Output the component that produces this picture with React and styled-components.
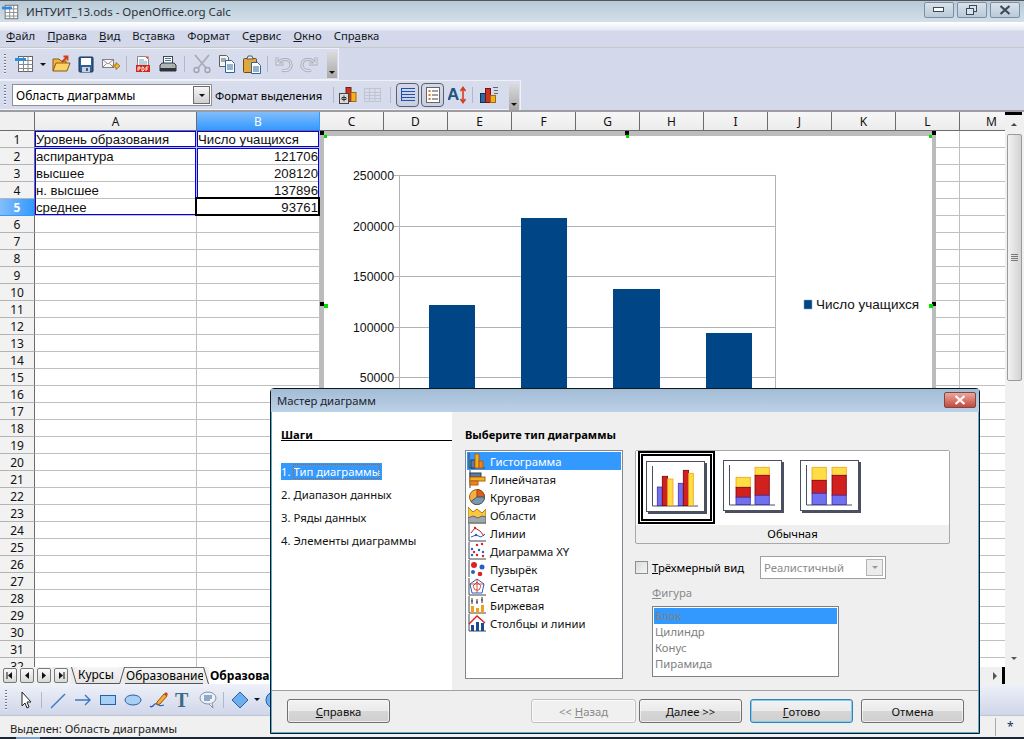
import React from 'react';
import styled, { createGlobalStyle } from 'styled-components';

const UI = '"Noto Sans", "DejaVu Sans", sans-serif';
const ARIAL = '"Liberation Sans", Arial, sans-serif';

const Global = createGlobalStyle`
  html, body { margin: 0; padding: 0; overflow: hidden; background: #d3d9eb; }
  * { box-sizing: border-box; }
`;

const Frame = styled.div`
  position: relative;
  width: 1024px;
  height: 739px;
  display: flex;
  flex-direction: column;
  overflow: hidden;
  font-family: ${UI};
  font-size: 11.3px;
  color: #000;
`;

const TitleBar = styled.div`
  height: 22px;
  border-top: 1px solid #565656;
  background: linear-gradient(#b7cad8, #d3dfe8);
  display: flex;
  align-items: center;
  padding-left: 2px;
`;
const TitleText = styled.span`
  margin-left: 6px;
  font-size: 11.5px;
  color: #2c3238;
`;
const WinButtons = styled.div`
  margin-left: auto;
  margin-right: 4px;
  display: flex;
  gap: 3px;
  align-self: flex-start;
  margin-top: 1px;
`;
const WinButton = styled.div`
  width: 30px;
  height: 16px;
  border: 1px solid #7d8ea6;
  border-radius: 2px;
  background: linear-gradient(#d8e2ea, #b9cad8);
  display: flex;
  align-items: center;
  justify-content: center;
`;

const MenuBar = styled.div`
  height: 26px;
  background: linear-gradient(#fff 0, #e6eaf3 8px, #d3d9eb 9px);
  display: flex;
  align-items: flex-end;
  padding: 0 0 3px 6px;
  gap: 12px;
  border-bottom: 1px solid #c8c8c4;
`;
const MenuItem = styled.span`
  line-height: 16px;
  color: #14181e;
`;
const Key = styled.span`
  text-decoration: underline;
`;

const ToolRow = styled.div`
  display: flex;
  height: ${p => p.$h}px;
  background: #d3d9eb;
`;
const Toolbar = styled.div`
  width: ${p => p.$w}px;
  display: flex;
  align-items: center;
  padding-left: 4px;
  background: linear-gradient(#d8ddee, #d5dbec);
  border-right: 1px solid #f0f2f8;
  border-bottom: 1px solid #f0f2f8;
  border-top: 1px solid #eef0f6;
  position: relative;
`;
const Grip = styled.div`
  width: 2px;
  height: 20px;
  margin-right: 6px;
  background: repeating-linear-gradient(#70767f 0 1px, #f4f5fa 1px 2px, transparent 2px 3px);
`;
const ToolBtn = styled.div`
  width: ${p => p.$w || 25}px;
  height: 24px;
  flex: none;
  display: flex;
  align-items: center;
  justify-content: center;
  margin-left: ${p => p.$ml || 0}px;
  ${p => p.$active && `
    border: 1px solid #5c6068;
    border-radius: 4px;
    background: linear-gradient(#d4d9ea, #c8cfe2);
    margin-right: 2px;
  `}
`;
const ToolSep = styled.div`
  width: 1px;
  height: 16px;
  flex: none;
  margin: 0 ${p => p.$m ?? 3}px;
  background: #b4b8c4;
`;
const Chevron = styled.div`
  position: absolute;
  right: 1px;
  top: 3px;
  width: 10px;
  height: 26px;
  background: linear-gradient(#dadada, #a9a9a9);
  display: flex;
  align-items: flex-end;
  justify-content: center;
  padding-bottom: 4px;
`;
const DownTri = styled.div`
  width: 0;
  height: 0;
  border-left: 3px solid transparent;
  border-right: 3px solid transparent;
  border-top: 3px solid ${p => p.$c || '#111'};
`;
const Combo = styled.div`
  width: 200px;
  height: 22px;
  flex: none;
  background: #fff;
  border: 1px solid #8e8f8f;
  font-size: 12px;
  display: flex;
  align-items: center;
  padding-left: 3px;
  justify-content: space-between;
`;
const ComboBtn = styled.div`
  width: 17px;
  height: 18px;
  margin-right: 1px;
  border: 1px solid #6c6c6c;
  background: linear-gradient(#f6f6f6, #cfcfcf);
  display: flex;
  align-items: center;
  justify-content: center;
`;
const ToolLabel = styled.span`
  margin-left: 3px;
  flex: none;
  width: 116px;
  white-space: nowrap;
`;

const SheetArea = styled.div`
  height: 557px;
  display: flex;
  border-top: 2px solid #9d9da1;
  background: #f0f0f0;
`;
const GridWrap = styled.div`
  position: relative;
  width: 1005px;
  overflow: hidden;
  background: #fff;
`;
const SheetGrid = styled.div`
  display: grid;
  grid-template-columns: 35px 162px 123px repeat(11, 64px);
  grid-auto-rows: 17px;
  grid-template-rows: 19px;
`;
const Corner = styled.div`
  background: #f0f0f0;
  border-right: 1px solid #6c6c6c;
  border-bottom: 1px solid #6c6c6c;
`;
const ColHead = styled.div`
  background: ${p => (p.$on ? 'linear-gradient(#82bdfb, #3399ff)' : 'linear-gradient(#f6f6f6, #ececec)')};
  color: ${p => (p.$on ? '#fff' : '#111')};
  border-right: 1px solid ${p => (p.$on ? '#3399ff' : '#6c6c6c')};
  border-bottom: 1px solid #6c6c6c;
  display: flex;
  align-items: center;
  justify-content: center;
  font-size: 12px;
`;
const RowHead = styled(ColHead)`
  background: ${p => (p.$on ? 'linear-gradient(90deg, #82bdfb, #3399ff)' : '#f2f2f2')};
  border-right: 1px solid #6c6c6c;
  border-bottom: 1px solid ${p => (p.$on ? '#3399ff' : '#b4b4b4')};
  font-weight: ${p => (p.$on ? 700 : 400)};
`;
const Cell = styled.div`
  border-right: 1px solid #c0c0c0;
  border-bottom: 1px solid #c0c0c0;
  font-family: ${ARIAL};
  font-size: 13.2px;
  line-height: 17px;
  padding: 0 1px;
  white-space: nowrap;
  overflow: hidden;
  color: #111;
  text-align: ${p => (p.$num ? 'right' : 'left')};
`;
const RangeBox = styled.div`
  position: absolute;
  left: ${p => p.$x}px;
  top: ${p => p.$y}px;
  width: ${p => p.$w}px;
  height: ${p => p.$h}px;
  border: ${p => p.$b || '1px solid #0000f0'};
  pointer-events: none;
`;

const ChartFrame = styled.div`
  position: absolute;
  left: 320px;
  top: 19px;
  width: 616px;
  height: 360px;
  background: #fff;
  border: 4px solid #bcbcbc;
  border-top-width: 5px;
`;
const Handle = styled.div`
  position: absolute;
  left: ${p => p.$x}px;
  top: ${p => p.$y}px;
  width: ${p => p.$s || 4}px;
  height: ${p => p.$s || 4}px;
  background: ${p => p.$c || '#000'};
`;

const VScroll = styled.div`
  width: 19px;
  padding-bottom: 2px;
  display: flex;
  flex-direction: column;
  align-items: flex-start;
`;
const ScrollCap = styled.div`
  width: 17px;
  height: 3px;
  background: #000;
`;
const ScrollArrow = styled.div`
  width: 17px;
  height: ${p => p.$h || 19}px;
  margin-top: ${p => p.$mt || 0};
  display: flex;
  align-items: center;
  justify-content: center;
`;
const UpTri = styled.div`
  width: 0;
  height: 0;
  border-left: 3px solid transparent;
  border-right: 3px solid transparent;
  border-bottom: 3px solid #444;
`;
const Thumb = styled.div`
  width: 15px;
  height: 247px;
  margin-left: 2px;
  border: 1px solid #9a9a9a;
  border-radius: 2px;
  background: linear-gradient(90deg, #f2f2f2, #d2d2d2);
  display: flex;
  flex-direction: column;
  align-items: center;
  justify-content: center;
  gap: 1px;
`;
const ThumbLine = styled.div`
  width: 7px;
  height: 1px;
  background: #777;
`;

const TabBar = styled.div`
  height: 17px;
  display: flex;
  align-items: center;
  padding-left: 3px;
  background: #f0f0f0;
`;
const NavBtn = styled.div`
  width: 14px;
  height: 15px;
  margin-right: 3px;
  border: 1px solid #777;
  border-radius: 2px;
  background: linear-gradient(#fafafa, #d8d8d8);
  display: flex;
  align-items: center;
  justify-content: center;
`;
const SheetTab = styled.div`
  height: 17px;
  display: flex;
  align-items: center;
  padding: 0 1px 1px;
  font-size: 12px;
  font-weight: ${p => (p.$on ? 700 : 400)};
  white-space: nowrap;
  flex: none;
  width: ${p => p.$w}px;
  overflow: hidden;
  border-top: ${p => (p.$top ? '1px solid #777' : 'none')};
  border-bottom: ${p => (p.$on ? 'none' : '1px solid #555')};
  background: ${p => (p.$on ? '#fff' : 'linear-gradient(#f6f6f6, #e4e4e4)')};
`;
const TabEdge = styled.svg`
  flex: none;
  display: block;
`;
const TabScrollEnd = styled.div`
  margin-left: auto;
  width: 37px;
  height: 17px;
  margin-right: 19px;
  display: flex;
  align-items: center;
  justify-content: space-between;
  padding-left: 25px;
`;
const RightTri = styled.div`
  width: 0;
  height: 0;
  border-top: 4px solid transparent;
  border-bottom: 4px solid transparent;
  border-left: 4px solid #555;
`;
const TabBlackBar = styled.div`
  width: 3px;
  height: 17px;
  background: #000;
`;

const DrawBar = styled.div`
  height: 32px;
  padding-left: 5px;
  display: flex;
  align-items: center;
  background: linear-gradient(#eef1f8, #d0d6ea);
  border-bottom: 1px solid #c0c4cc;
`;
const StatusBar = styled.div`
  height: 21px;
  display: flex;
  align-items: center;
  padding: 3px 0 0 10px;
  background: #f0f0f0;
  color: #222;
  position: relative;
`;
const StatusStar = styled.div`
  position: absolute;
  left: 995px;
  top: 2px;
  height: 18px;
  padding-left: 11px;
  border-left: 1px solid #aaa;
  font-size: 12px;
  color: #203060;
`;
const Taskbar = styled.div`
  height: 2px;
  background: #1c2530;
  padding-left: 16px;
`;
const StartOrb = styled.div`
  width: 24px;
  height: 2px;
  background: #7fa0c0;
`;

const Dialog = styled.div`
  position: absolute;
  left: 270px;
  top: 388px;
  width: 710px;
  height: 346px;
  display: flex;
  flex-direction: column;
  border: 1px solid #101820;
  border-radius: 4px 4px 0 0;
  background: #55b0d8;
  padding: 0 1px 1px;
`;
const DialogTitle = styled.div`
  height: 23px;
  margin: 0 -1px;
  display: flex;
  align-items: center;
  padding-left: 6px;
  color: #1c2430;
  background: linear-gradient(#a3bcd6, #bbd1e6);
  position: relative;
`;
const CloseBtn = styled.div`
  position: absolute;
  right: 3px;
  top: 3px;
  width: 32px;
  height: 16px;
  border: 1px solid #7a4a48;
  border-radius: 2px;
  background: linear-gradient(#e9a99c, #c8493c);
  display: flex;
  align-items: center;
  justify-content: center;
`;
const DialogBody = styled.div`
  flex: 1;
  display: flex;
  min-height: 0;
`;
const StepsPane = styled.div`
  width: 180px;
  background: #fff;
  padding: 16px 0 0 9px;
`;
const StepsHead = styled.div`
  font-weight: 700;
  line-height: 14px;
  border-bottom: 1px solid #000;
  height: 13px;
  margin-bottom: 22px;
`;
const Step = styled.div`
  height: 17px;
  line-height: 17px;
  margin-bottom: 6px;
  width: ${p => (p.$on ? '101px' : 'auto')};
  background: ${p => (p.$on ? '#3399ff' : 'transparent')};
  color: ${p => (p.$on ? '#fff' : '#111')};
  white-space: nowrap;
`;
const StepFocus = styled.span`
  outline: 1px dotted #c06000;
  outline-offset: -1px;
`;
const MainPane = styled.div`
  flex: 1;
  background: #efefef;
  padding: 15px 0 0 13px;
`;
const PaneHead = styled.div`
  font-weight: 700;
  font-size: 11.1px;
  line-height: 16px;
  margin-bottom: 7px;
`;
const PaneGrid = styled.div`
  display: flex;
  gap: 12px;
`;
const TypeList = styled.div`
  width: 158px;
  height: 229px;
  background: #fff;
  border: 1px solid #82868e;
  padding: 1px;
`;
const TypeItem = styled.div`
  height: 18px;
  display: flex;
  align-items: center;
  gap: 4px;
  padding-left: 1px;
  white-space: nowrap;
  background: ${p => (p.$on ? '#3399ff' : 'transparent')};
  color: ${p => (p.$on ? '#fff' : '#111')};
`;
const OptionsCol = styled.div`
  width: 315px;
  display: flex;
  flex-direction: column;
`;
const VariantPanel = styled.div`
  height: 94px;
  border: 1px solid #a8a8a8;
  border-radius: 2px;
  display: flex;
  flex-direction: column;
`;
const VariantRow = styled.div`
  height: 74px;
  background: #fff;
  display: flex;
  padding-left: 2px;
  align-items: flex-start;
`;
const VariantCell = styled.div`
  width: 77px;
  height: 73px;
  flex: none;
  display: flex;
  padding: 9px 0 0 8px;
  ${p => p.$on && 'border: 5px double #000; padding: 5px 0 0 3px;'}
`;
const VariantLabel = styled.div`
  flex: 1;
  text-align: center;
  line-height: 18px;
`;
const CheckRow = styled.div`
  display: flex;
  align-items: center;
  height: 23px;
  margin-top: 12px;
`;
const CheckBox = styled.div`
  width: 13px;
  height: 13px;
  border: 1px solid #8e8f8f;
  background: linear-gradient(135deg, #dcdcdc, #f4f4f4);
  margin-right: 4px;
`;
const CheckLabel = styled.span`
  width: 108px;
  white-space: nowrap;
`;
const DisabledSelect = styled.div`
  width: 126px;
  height: 23px;
  background: #fff;
  border: 1px solid #a0a0a0;
  color: #8a8a8a;
  display: flex;
  align-items: center;
  justify-content: space-between;
  padding-left: 3px;
`;
const DisabledBtn = styled.div`
  width: 17px;
  height: 17px;
  margin-right: 2px;
  border: 1px solid #b4b4b4;
  background: #ececec;
  display: flex;
  align-items: center;
  justify-content: center;
`;
const ShapeBlock = styled.div`
  margin: 6px 0 0 17px;
`;
const ShapeLabel = styled.div`
  color: #8a8a8a;
  line-height: 16px;
  margin-bottom: 5px;
`;
const ShapeList = styled.div`
  width: 187px;
  height: 71px;
  background: #fff;
  border: 1px solid #7c8088;
  padding: 1px;
`;
const ShapeItem = styled.div`
  height: 16px;
  line-height: 16px;
  padding-left: 1px;
  color: #808080;
  background: ${p => (p.$on ? '#3399ff' : 'transparent')};
`;
const DialogFooter = styled.div`
  height: 42px;
  flex: none;
  background: #efefef;
  border-top: 1px solid #a0a0a0;
  display: flex;
  align-items: flex-start;
  padding: 8px 13px 0 15px;
  gap: 3px;
`;
const WizButton = styled.div`
  width: ${p => p.$w || 103}px;
  height: 24px;
  flex: none;
  border: 1px solid ${p => (p.$focus ? '#3c7fb1' : p.$off ? '#c0c0c0' : '#707070')};
  border-radius: 3px;
  background: ${p => (p.$off ? '#f0f0f0' : 'linear-gradient(#f2f2f2 0, #ebebeb 48%, #d6d6d6 52%, #cfcfcf 100%)')};
  color: ${p => (p.$off ? '#888' : '#111')};
  box-shadow: ${p => (p.$focus ? 'inset 0 0 0 1px #7fd0f0' : 'inset 0 0 0 1px rgba(255,255,255,0.6)')};
  display: flex;
  align-items: center;
  justify-content: center;
  white-space: pre;
  margin-left: ${p => p.$ml || 0}px;
`;

const Ic = ({ w = 20, h = 20, children }) => (
  <svg width={w} height={h} viewBox={`0 0 ${w} ${h}`}>{children}</svg>
);

const TableIcon = ({ size = 20 }) => (
  <svg width={size} height={size} viewBox="0 0 20 20">
    <rect x="3.5" y="2.5" width="14" height="15" fill="#fff" stroke="#666" />
    <path d="M3.5 6.5h14M3.5 10.5h14M3.5 14.5h14M8.5 2.5v15M13 2.5v15" stroke="#888" />
    <rect x="0" y="4" width="11" height="3" fill="#2b8be0" />
  </svg>
);
const ToolIcons = {
  open: (
    <Ic>
      <path d="M2 5h6l2 2h5v3H5L2 17z" fill="#f4b63a" stroke="#8a5a10" />
      <path d="M2 17l3-8h14l-3 8z" fill="#fbd26a" stroke="#8a5a10" />
      <path d="M11 8l5-5M12.5 2.5h4v4" stroke="#d04010" strokeWidth="1.8" fill="none" />
    </Ic>
  ),
  save: (
    <Ic>
      <rect x="3" y="3" width="14" height="15" rx="1" fill="#2f5f96" stroke="#16304f" />
      <rect x="5" y="4" width="10" height="7" fill="#fff" />
      <rect x="6" y="13" width="8" height="5" fill="#c8d0da" />
      <rect x="10" y="14" width="2" height="3" fill="#2f5f96" />
    </Ic>
  ),
  mail: (
    <Ic>
      <rect x="1.5" y="5.5" width="11" height="8" fill="#f8f8f8" stroke="#808080" />
      <path d="M1.5 5.5l5.500 4.500 5.500-4.500M1.500 13.500l4-4M12.500 13.500l-4-4" fill="none" stroke="#909090" />
      <path d="M12 11h3V8.500l4 3.500-4 3.500V13h-3z" fill="#f4b830" stroke="#8a5a10" strokeWidth=".7" />
    </Ic>
  ),
  pdf: (
    <Ic>
      <path d="M4.500 2.500h8l3 3v8h-11z" fill="#fff" stroke="#8a8a8a" />
      <path d="M12 2.500h3.500v3z" fill="#e04030" />
      <path d="M6 6h5M6 8h8M6 10h8" stroke="#70a0c8" />
      <rect x="3" y="11" width="14" height="7" fill="#d02818" />
      <path d="M5 17v-4h2v2H5M9 13v4h1l1-1v-2l-1-1zM13 17v-4h2.500M13 15h2" stroke="#fff" fill="none" strokeWidth=".9" />
    </Ic>
  ),
  print: (
    <Ic>
      <rect x="5.500" y="2.500" width="9" height="7" fill="#fff" stroke="#444" />
      <path d="M7 4.500h6M7 6.500h6" stroke="#3a70a8" />
      <path d="M2 11l2-2h12l2 2v6H2z" fill="#b0b4ba" stroke="#30343a" />
      <rect x="2" y="14" width="16" height="3" fill="#30343a" />
      <rect x="14" y="11.500" width="2" height="1" fill="#60c040" />
    </Ic>
  ),
  cut: (
    <Ic>
      <path d="M3 1l11 13M17 1L6 14" stroke="#a8acb4" strokeWidth="1.8" />
      <circle cx="4.500" cy="16" r="2.500" fill="none" stroke="#a0a4ac" strokeWidth="1.4" />
      <circle cx="15.500" cy="16" r="2.500" fill="none" stroke="#a0a4ac" strokeWidth="1.4" />
    </Ic>
  ),
  copy: (
    <Ic>
      <path d="M2.500 1.500h7l2 2v9h-9z" fill="#f4f4f4" stroke="#5a5f66" />
      <path d="M4 5h5M4 7h5" stroke="#5a5f66" />
      <path d="M8.500 6.500h6l3 3v9h-9z" fill="#fff" stroke="#2e6498" />
      <path d="M10 11h6M10 13h6M10 15h6" stroke="#2e6498" />
    </Ic>
  ),
  paste: (
    <Ic>
      <rect x="1.500" y="4.500" width="13" height="14" rx="1" fill="#e0a83c" stroke="#6a4a14" />
      <path d="M5 5l1-3h4l1 3z" fill="#e8e8e8" stroke="#5a5f66" />
      <path d="M9.500 8.500h6l3 3v8h-9z" fill="#fff" stroke="#2e6498" />
      <path d="M11 13h6M11 15h6M11 17h6" stroke="#2e6498" />
    </Ic>
  ),
  undo: (
    <Ic>
      <path d="M3 3v7h7M4 10c2-6 12-6 13 0 1 5-5 8-9 6" fill="none" stroke="#a8acb6" strokeWidth="3" />
      <path d="M3 3v7h7M4 10c2-6 12-6 13 0 1 5-5 8-9 6" fill="none" stroke="#dfe3ee" strokeWidth="1.200" />
    </Ic>
  ),
  redo: (
    <Ic>
      <path d="M17 3v7h-7M16 10c-2-6-12-6-13 0-1 5 5 8 9 6" fill="none" stroke="#a8acb6" strokeWidth="3" />
      <path d="M17 3v7h-7M16 10c-2-6-12-6-13 0-1 5 5 8 9 6" fill="none" stroke="#dfe3ee" strokeWidth="1.200" />
    </Ic>
  ),
  chartEdit: (
    <Ic>
      <rect x="8" y="2.500" width="5" height="14" fill="#d03020" stroke="#702018" />
      <rect x="13" y="7.500" width="5" height="9" fill="#f4b020" stroke="#a06a10" />
      <rect x="1.500" y="8.500" width="9" height="10" fill="#d8dade" stroke="#444" />
      <path d="M6 10.500v6M4 12.500h4v2H4z" stroke="#333" fill="#f4f4f4" />
    </Ic>
  ),
  gridOff: (
    <Ic>
      <rect x="1.500" y="3.500" width="16" height="13" fill="none" stroke="#c0c4cc" />
      <path d="M1.500 7.500h16M1.500 10.500h16M1.500 13.500h16M6.500 3.500v13M12 3.500v13" stroke="#c0c4cc" />
    </Ic>
  ),
  titleOn: (
    <Ic>
      <path d="M3 3.500h14M3 6.500h14M3 9.500h14M3 12.500h14M3 15.500h14M3.500 3v13" stroke="#2050b0" fill="none" />
    </Ic>
  ),
  legendOn: (
    <Ic>
      <rect x="3.500" y="2.500" width="13" height="15" fill="#fff" stroke="#666" />
      <path d="M5.500 6h2M5.500 10h2M5.500 14h2" stroke="#e07020" strokeWidth="2" />
      <path d="M9 6h6M9 10h6M9 14h6" stroke="#444" />
    </Ic>
  ),
  scaleText: (
    <Ic>
      <text x="-1" y="15" fontFamily={ARIAL} fontWeight="700" fontSize="17" fill="#24527e">A</text>
      <path d="M15 4v12M12.500 6L15 2.500 17.500 6M12.500 14L15 17.500 17.500 14" stroke="#d04020" strokeWidth="1.600" fill="none" />
    </Ic>
  ),
  chartType: (
    <Ic>
      <rect x="1.500" y="8.500" width="5" height="9" fill="#2c68a8" stroke="#16304f" />
      <rect x="6.500" y="3.500" width="5" height="14" fill="#d03020" stroke="#701810" />
      <rect x="11.500" y="10.500" width="5" height="7" fill="#f4b020" stroke="#a06a10" />
      <path d="M14 2.500h5M15 5.500h4M15 8.500h4" stroke="#666" />
    </Ic>
  ),
};

const DrawIcons = {
  cursor: <Ic><path d="M6 2v14l3-3 2 5 2-1-2-5h4z" fill="#fff" stroke="#222" /></Ic>,
  line: <Ic><path d="M3 18L17 4" stroke="#3a78c8" strokeWidth="1.400" /></Ic>,
  arrow: <Ic><path d="M2 10h15M12 5l5 5-5 5" stroke="#3a78c8" strokeWidth="1.400" fill="none" /></Ic>,
  rect: <Ic><rect x="2.500" y="5.500" width="15" height="9" fill="#a8d0f4" stroke="#2860a8" /></Ic>,
  ellipse: <Ic><ellipse cx="10" cy="10" rx="8" ry="5" fill="#a8d0f4" stroke="#2860a8" /></Ic>,
  free: (
    <Ic>
      <path d="M2 16c3 3 4-4 7-2s4 2 7 1" stroke="#2860c0" strokeWidth="1.300" fill="none" />
      <path d="M9 12l7-8 3 2-7 8-3 1z" fill="#f4b030" stroke="#a05010" />
      <path d="M16 4l3 2 1-2-2-2z" fill="#d04030" />
    </Ic>
  ),
  text: <Ic><text x="2" y="17" fontFamily='"Liberation Serif", serif' fontWeight="700" fontSize="20" fill="#3c6a88">T</text></Ic>,
  callout: (
    <Ic>
      <ellipse cx="10" cy="8" rx="8" ry="6" fill="#eef2f8" stroke="#8a9098" />
      <path d="M11 14l4 4-1-5" fill="#eef2f8" stroke="#8a9098" />
      <path d="M6 6h8M6 8h8M6 10h6" stroke="#2860a8" />
    </Ic>
  ),
  diamond: <Ic><path d="M10 2l8 8-8 8-8-8z" fill="#6ab0ee" stroke="#2860a8" /></Ic>,
  flow: <Ic><circle cx="10" cy="10" r="8" fill="#6ab0ee" stroke="#2860a8" /></Ic>,
};

const S = 18;
const TypeIcons = [
  <Ic w={S} h={S}>
    <path d="M1 1v15h16" stroke="#445" fill="none" />
    <rect x="3" y="8" width="4" height="8" fill="#5a7ea0" stroke="#2a3e50" />
    <rect x="7" y="2" width="4" height="14" fill="#f4b020" stroke="#b06010" />
    <rect x="11" y="9" width="4" height="7" fill="#f08020" stroke="#b06010" />
  </Ic>,
  <Ic w={S} h={S}>
    <path d="M2 0v18" stroke="#445" />
    <rect x="2" y="3" width="11" height="4" fill="#5a7ea0" stroke="#2a3e50" />
    <rect x="2" y="7" width="15" height="4" fill="#f4b020" stroke="#b06010" />
    <rect x="2" y="11" width="8" height="4" fill="#f08020" stroke="#b06010" />
  </Ic>,
  <Ic w={S} h={S}>
    <circle cx="9" cy="9" r="7.500" fill="#f4b040" stroke="#a06010" />
    <path d="M9 9V1.500a7.500 7.500 0 0 1 7.500 7.500z" fill="#d86020" stroke="#a04010" />
    <path d="M9 9h7.500A7.500 7.500 0 0 1 3 13.500z" fill="#7a98b0" stroke="#44586a" />
  </Ic>,
  <Ic w={S} h={S}>
    <path d="M0 1l5 5 4-3 5 4 4-4v14H0z" fill="#f8c840" stroke="#b07810" />
    <path d="M0 12l5-2 5 2 4-2 4 1v6H0z" fill="#a0a8b0" stroke="#5a6470" />
  </Ic>,
  <Ic w={S} h={S}>
    <path d="M1 0v17h17" stroke="#445" fill="none" />
    <path d="M3 13l5-2 5 2 4-3" stroke="#2860c0" fill="none" />
    <path d="M3 9l4-5 5 3 4 5" stroke="#d02020" fill="none" />
    <circle cx="7" cy="4" r="1.200" fill="#d02020" />
    <circle cx="8" cy="11" r="1.200" fill="#2860c0" />
  </Ic>,
  <Ic w={S} h={S}>
    <path d="M1 0v17h17" stroke="#445" fill="none" />
    {[[4, 7, 0], [9, 3, 1], [14, 2, 1], [6, 10, 1], [11, 8, 0], [4, 13, 0], [9, 13, 1], [15, 10, 0], [15, 14, 1]].map(([x, y, r], i) => (
      <circle key={i} cx={x} cy={y} r="1.200" fill={r ? '#d82020' : '#2860c0'} />
    ))}
  </Ic>,
  <Ic w={S} h={S}>
    <path d="M1 0v17" stroke="#445" fill="none" />
    <circle cx="6" cy="5" r="3" fill="#e02020" />
    <circle cx="14" cy="7" r="2.500" fill="#2860c0" />
    <circle cx="5" cy="12" r="2" fill="#2860c0" />
    <circle cx="12" cy="14" r="2.300" fill="#e02020" />
  </Ic>,
  <Ic w={S} h={S}>
    <path d="M1 0v17h17" stroke="#445" fill="none" />
    <path d="M9 1l7 5-2 9H4L2 6z" fill="none" stroke="#2860c0" />
    <path d="M9 4l4 4-2 4H7L5 8zM9 1v14M2 6l14 0" fill="none" stroke="#c83020" strokeWidth=".8" />
  </Ic>,
  <Ic w={S} h={S}>
    <path d="M1 0v17h17" stroke="#445" fill="none" />
    <path d="M4 2v6M3 5h2M9 3v5M8 6h2M14 1v6M13 4h2" stroke="#333" />
    <rect x="3" y="10" width="3" height="7" fill="#f0a020" />
    <rect x="8" y="12" width="3" height="5" fill="#f0a020" />
    <rect x="13" y="9" width="3" height="8" fill="#f0a020" />
  </Ic>,
  <Ic w={S} h={S}>
    <path d="M1 0v17h17" stroke="#445" fill="none" />
    <rect x="3" y="11" width="3" height="6" fill="#1c4a90" />
    <rect x="8" y="8" width="3" height="9" fill="#1c4a90" />
    <rect x="13" y="9" width="3" height="8" fill="#1c4a90" />
    <path d="M1 10l8-8 8 7" stroke="#d82020" strokeWidth="1.400" fill="none" />
  </Ic>,
];

const columns = ['A', 'B', 'C', 'D', 'E', 'F', 'G', 'H', 'I', 'J', 'K', 'L', 'M'];
const rowsData = {
  1: ['Уровень образования', 'Число учащихся'],
  2: ['аспирантура', '121706'],
  3: ['высшее', '208120'],
  4: ['н. высшее', '137896'],
  5: ['среднее', '93761'],
};
const rowNumbers = Array.from({ length: 32 }, (_, i) => i + 1);

const bars = [
  { x: 429, w: 46, top: 305 },
  { x: 521, w: 46, top: 218 },
  { x: 613, w: 47, top: 289 },
  { x: 706, w: 46, top: 333 },
];
const axisTicks = [
  { y: 175, label: '250000' },
  { y: 226, label: '200000' },
  { y: 276, label: '150000' },
  { y: 327, label: '100000' },
  { y: 377, label: '50000' },
];

const chartTypes = ['Гистограмма', 'Линейчатая', 'Круговая', 'Области', 'Линии', 'Диаграмма XY', 'Пузырёк', 'Сетчатая', 'Биржевая', 'Столбцы и линии'];

const BLUE = ['#7070f0', '#4030b0'];
const RED = ['#d02020', '#800000'];
const YEL = ['#ffdd44', '#f0a020'];

const thumbs = [
  [
    [11.3, 26, 5, 18.6, BLUE], [16.3, 15.3, 5.3, 29.3, RED], [21.6, 18, 5.4, 26.6, YEL],
    [32.3, 22.3, 5, 22.3, BLUE], [37.3, 9.3, 5.3, 35.3, RED], [42.6, 12.3, 4.7, 32.3, YEL],
  ],
  [
    [13, 17.3, 14.3, 10, YEL], [13, 27.3, 14.3, 10, RED], [13, 37.3, 14.3, 7.3, BLUE],
    [32, 7.3, 14.3, 8, YEL], [32, 15.3, 14.3, 20, RED], [32, 35.3, 14.3, 9.3, BLUE],
  ],
  [
    [12, 7.3, 14.3, 13, YEL], [12, 20.3, 14.3, 13, RED], [12, 33.3, 14.3, 11.3, BLUE],
    [32, 7.3, 14.3, 8, YEL], [32, 15.3, 14.3, 20, RED], [32, 35.3, 14.3, 9.3, BLUE],
  ],
];

const ChartThumb = ({ rects }) => (
  <svg width="61" height="53" viewBox="0 0 61 53">
    <rect x="2" y="2" width="59" height="51" fill="#4a5060" />
    <rect x="0.5" y="0.5" width="58" height="50" fill="#fff" stroke="#4a5060" />
    <path d="M6.5 5v40H52" fill="none" stroke="#4a5060" />
    {rects.map(([x, y, w, h, c], i) => (
      <rect key={i} x={x} y={y} width={w} height={h} fill={c[0]} stroke={c[1]} strokeWidth=".8" />
    ))}
  </svg>
);

const NavArrow = ({ dir, stop }) => (
  <svg width="8" height="9" viewBox="0 0 8 9">
    {dir === 'l' ? <path d="M6 1v7L2 4.5z" fill="#111" /> : <path d="M2 1v7l4-3.5z" fill="#111" />}
    {stop && <path d={dir === 'l' ? 'M1 1v7' : 'M7 1v7'} stroke="#111" />}
  </svg>
);

// slanted edge between two sheet tabs; fall = top-left to bottom-right
const Edge = ({ fall }) => (
  <TabEdge width="6" height="17" viewBox="0 0 6 17">
    <path d={fall ? 'M0 0L6 17H0z' : 'M6 0L0 17H6z'} fill="#ececec" />
    <path d={fall ? 'M0.500 0L5.500 17' : 'M5.500 0L0.500 17'} stroke="#555" fill="none" />
  </TabEdge>
);

function App() {
  return (
    <Frame>
      <Global />
      <TitleBar>
        <TableIcon size={18} />
        <TitleText>ИНТУИТ_13.ods - OpenOffice.org Calc</TitleText>
        <WinButtons>
          <WinButton>
            <svg width="12" height="6" viewBox="0 0 12 6"><rect x=".5" y=".5" width="10" height="4" fill="#fff" stroke="#3c4a5a" /></svg>
          </WinButton>
          <WinButton>
            <svg width="12" height="11" viewBox="0 0 12 11"><rect x="3.5" y=".5" width="7" height="6" fill="#d8e2ea" stroke="#3c4a5a" /><rect x=".5" y="3.5" width="7" height="6" fill="#d8e2ea" stroke="#3c4a5a" /></svg>
          </WinButton>
          <WinButton>
            <svg width="12" height="10" viewBox="0 0 12 10"><path d="M1.5 1l9 8M10.5 1l-9 8" stroke="#3c4a5a" strokeWidth="2.2" /></svg>
          </WinButton>
        </WinButtons>
      </TitleBar>

      <MenuBar>
        <MenuItem><Key>Ф</Key>айл</MenuItem>
        <MenuItem><Key>П</Key>равка</MenuItem>
        <MenuItem><Key>В</Key>ид</MenuItem>
        <MenuItem>Вс<Key>т</Key>авка</MenuItem>
        <MenuItem>Фо<Key>р</Key>мат</MenuItem>
        <MenuItem>С<Key>е</Key>рвис</MenuItem>
        <MenuItem><Key>О</Key>кно</MenuItem>
        <MenuItem>Спр<Key>а</Key>вка</MenuItem>
      </MenuBar>

      <ToolRow $h={32}>
        <Toolbar $w={339}>
          <Grip />
          <ToolBtn><TableIcon /></ToolBtn>
          <ToolBtn $w={11}><DownTri /></ToolBtn>
          <ToolBtn>{ToolIcons.open}</ToolBtn>
          <ToolBtn>{ToolIcons.save}</ToolBtn>
          <ToolBtn>{ToolIcons.mail}</ToolBtn>
          <ToolSep />
          <ToolBtn>{ToolIcons.pdf}</ToolBtn>
          <ToolBtn>{ToolIcons.print}</ToolBtn>
          <ToolSep $m={4} />
          <ToolBtn>{ToolIcons.cut}</ToolBtn>
          <ToolBtn>{ToolIcons.copy}</ToolBtn>
          <ToolBtn>{ToolIcons.paste}</ToolBtn>
          <ToolSep />
          <ToolBtn>{ToolIcons.undo}</ToolBtn>
          <ToolBtn>{ToolIcons.redo}</ToolBtn>
          <Chevron><DownTri /></Chevron>
        </Toolbar>
      </ToolRow>

      <ToolRow $h={30}>
        <Toolbar $w={521}>
          <Grip />
          <Combo>
            Область диаграммы
            <ComboBtn><DownTri /></ComboBtn>
          </Combo>
          <ToolLabel>Формат выделения</ToolLabel>
          <ToolSep $m={2} />
          <ToolBtn $w={23}>{ToolIcons.chartEdit}</ToolBtn>
          <ToolBtn $w={28}>{ToolIcons.gridOff}</ToolBtn>
          <ToolSep />
          <ToolBtn $active $w={23} $ml={2}>{ToolIcons.titleOn}</ToolBtn>
          <ToolBtn $active $w={23}>{ToolIcons.legendOn}</ToolBtn>
          <ToolBtn $w={23}>{ToolIcons.scaleText}</ToolBtn>
          <ToolSep />
          <ToolBtn>{ToolIcons.chartType}</ToolBtn>
          <Chevron><DownTri /></Chevron>
        </Toolbar>
      </ToolRow>

      <SheetArea>
        <GridWrap>
          <SheetGrid>
            <Corner />
            {columns.map(c => <ColHead key={c} $on={c === 'B'}>{c}</ColHead>)}
            {rowNumbers.map(n => (
              <React.Fragment key={n}>
                <RowHead $on={n === 5}>{n}</RowHead>
                {columns.map((c, i) => (
                  <Cell key={c} $num={i === 1 && n > 1}>{rowsData[n] && i < 2 ? rowsData[n][i] : ''}</Cell>
                ))}
              </React.Fragment>
            ))}
          </SheetGrid>
          <RangeBox $x={35} $y={19} $w={161} $h={16} />
          <RangeBox $x={197} $y={19} $w={122} $h={16} />
          <RangeBox $x={35} $y={36} $w={161} $h={67} />
          <RangeBox $x={197} $y={36} $w={122} $h={50} />
          <RangeBox $x={195} $y={85} $w={125} $h={19} $b="2px solid #000" />

          <ChartFrame>
            <svg width="608" height="351" viewBox="324 136 608 351">
              <rect x="399.5" y="175.5" width="376" height="300" fill="#fff" stroke="#b3b3b3" />
              {axisTicks.map(t => (
                <g key={t.y}>
                  <path d={`M394 ${t.y + 0.5}H775`} stroke="#b3b3b3" />
                  <text x="394" y={t.y + 4.5} textAnchor="end" fontFamily={ARIAL} fontSize="12.3" fill="#111">{t.label}</text>
                </g>
              ))}
              {bars.map(b => <rect key={b.x} x={b.x} y={b.top} width={b.w} height={476 - b.top} fill="#004586" />)}
              <rect x="804" y="300" width="8" height="9" fill="#004586" stroke="#8aa8c8" strokeWidth=".5" />
              <text x="816" y="309" fontFamily={ARIAL} fontSize="13.5" fill="#111">Число учащихся</text>
            </svg>
          </ChartFrame>
          <Handle $x={320} $y={19} />
          <Handle $x={324} $y={23} $c="#00e000" $s={3} />
          <Handle $x={625} $y={19} />
          <Handle $x={626} $y={23} $c="#00e000" $s={3} />
          <Handle $x={932} $y={19} />
          <Handle $x={929} $y={23} $c="#00e000" $s={3} />
          <Handle $x={320} $y={190} />
          <Handle $x={324} $y={192} $c="#00e000" $s={4} />
          <Handle $x={932} $y={190} />
          <Handle $x={929} $y={192} $c="#00e000" $s={4} />
        </GridWrap>
        <VScroll>
          <ScrollCap />
          <ScrollArrow><UpTri /></ScrollArrow>
          <Thumb><ThumbLine /><ThumbLine /><ThumbLine /><ThumbLine /></Thumb>
          <ScrollArrow $mt="auto" $h={14}><DownTri $c="#555" /></ScrollArrow>
        </VScroll>
      </SheetArea>

      <TabBar>
        <NavBtn><NavArrow dir="l" stop /></NavBtn>
        <NavBtn><NavArrow dir="l" /></NavBtn>
        <NavBtn><NavArrow dir="r" /></NavBtn>
        <NavBtn><NavArrow dir="r" stop /></NavBtn>
        <Edge fall />
        <SheetTab $w={42}>Курсы</SheetTab>
        <Edge />
        <SheetTab $w={78} $top>Образование</SheetTab>
        <Edge fall />
        <SheetTab $on $w={120}>Образование (2)</SheetTab>
        <TabScrollEnd><RightTri /><TabBlackBar /></TabScrollEnd>
      </TabBar>

      <DrawBar>
        <Grip />
        <ToolBtn>{DrawIcons.cursor}</ToolBtn>
        <ToolSep />
        <ToolBtn>{DrawIcons.line}</ToolBtn>
        <ToolBtn>{DrawIcons.arrow}</ToolBtn>
        <ToolBtn>{DrawIcons.rect}</ToolBtn>
        <ToolBtn>{DrawIcons.ellipse}</ToolBtn>
        <ToolBtn>{DrawIcons.free}</ToolBtn>
        <ToolBtn>{DrawIcons.text}</ToolBtn>
        <ToolBtn>{DrawIcons.callout}</ToolBtn>
        <ToolSep />
        <ToolBtn>{DrawIcons.diamond}</ToolBtn>
        <ToolBtn $w={9}><DownTri /></ToolBtn>
        <ToolBtn>{DrawIcons.flow}</ToolBtn>
      </DrawBar>

      <StatusBar>
        Выделен: Область диаграммы
        <StatusStar>*</StatusStar>
      </StatusBar>
      <Taskbar><StartOrb /></Taskbar>

      <Dialog>
        <DialogTitle>
          Мастер диаграмм
          <CloseBtn>
            <svg width="12" height="10" viewBox="0 0 12 10"><path d="M1.5 1l9 8M10.5 1l-9 8" stroke="#fff" strokeWidth="2.2" /></svg>
          </CloseBtn>
        </DialogTitle>
        <DialogBody>
          <StepsPane>
            <StepsHead>Шаги</StepsHead>
            <Step $on>1. <StepFocus>Тип диаграммы</StepFocus></Step>
            <Step>2. Диапазон данных</Step>
            <Step>3. Ряды данных</Step>
            <Step>4. Элементы диаграммы</Step>
          </StepsPane>
          <MainPane>
            <PaneHead>Выберите тип диаграммы</PaneHead>
            <PaneGrid>
              <TypeList>
                {chartTypes.map((t, i) => (
                  <TypeItem key={t} $on={i === 0}>{TypeIcons[i]}{t}</TypeItem>
                ))}
              </TypeList>
              <OptionsCol>
                <VariantPanel>
                  <VariantRow>
                    {thumbs.map((r, i) => (
                      <VariantCell key={i} $on={i === 0}><ChartThumb rects={r} /></VariantCell>
                    ))}
                  </VariantRow>
                  <VariantLabel>Обычная</VariantLabel>
                </VariantPanel>
                <CheckRow>
                  <CheckBox />
                  <CheckLabel><Key>Т</Key>рёхмерный вид</CheckLabel>
                  <DisabledSelect>
                    Реалистичный
                    <DisabledBtn><DownTri $c="#999" /></DisabledBtn>
                  </DisabledSelect>
                </CheckRow>
                <ShapeBlock>
                  <ShapeLabel><Key>Ф</Key>игура</ShapeLabel>
                  <ShapeList>
                    <ShapeItem $on>Блок</ShapeItem>
                    <ShapeItem>Цилиндр</ShapeItem>
                    <ShapeItem>Конус</ShapeItem>
                    <ShapeItem>Пирамида</ShapeItem>
                  </ShapeList>
                </ShapeBlock>
              </OptionsCol>
            </PaneGrid>
          </MainPane>
        </DialogBody>
        <DialogFooter>
          <WizButton><Key>С</Key>правка</WizButton>
          <WizButton $off $w={105} $ml={138}>{'<< '}<Key>Н</Key>азад</WizButton>
          <WizButton><Key>Д</Key>алее {'>>'}</WizButton>
          <WizButton $focus $ml={5}><Key>Г</Key>отово</WizButton>
          <WizButton $ml={5}>Отмена</WizButton>
        </DialogFooter>
      </Dialog>
    </Frame>
  );
}

export default App;
